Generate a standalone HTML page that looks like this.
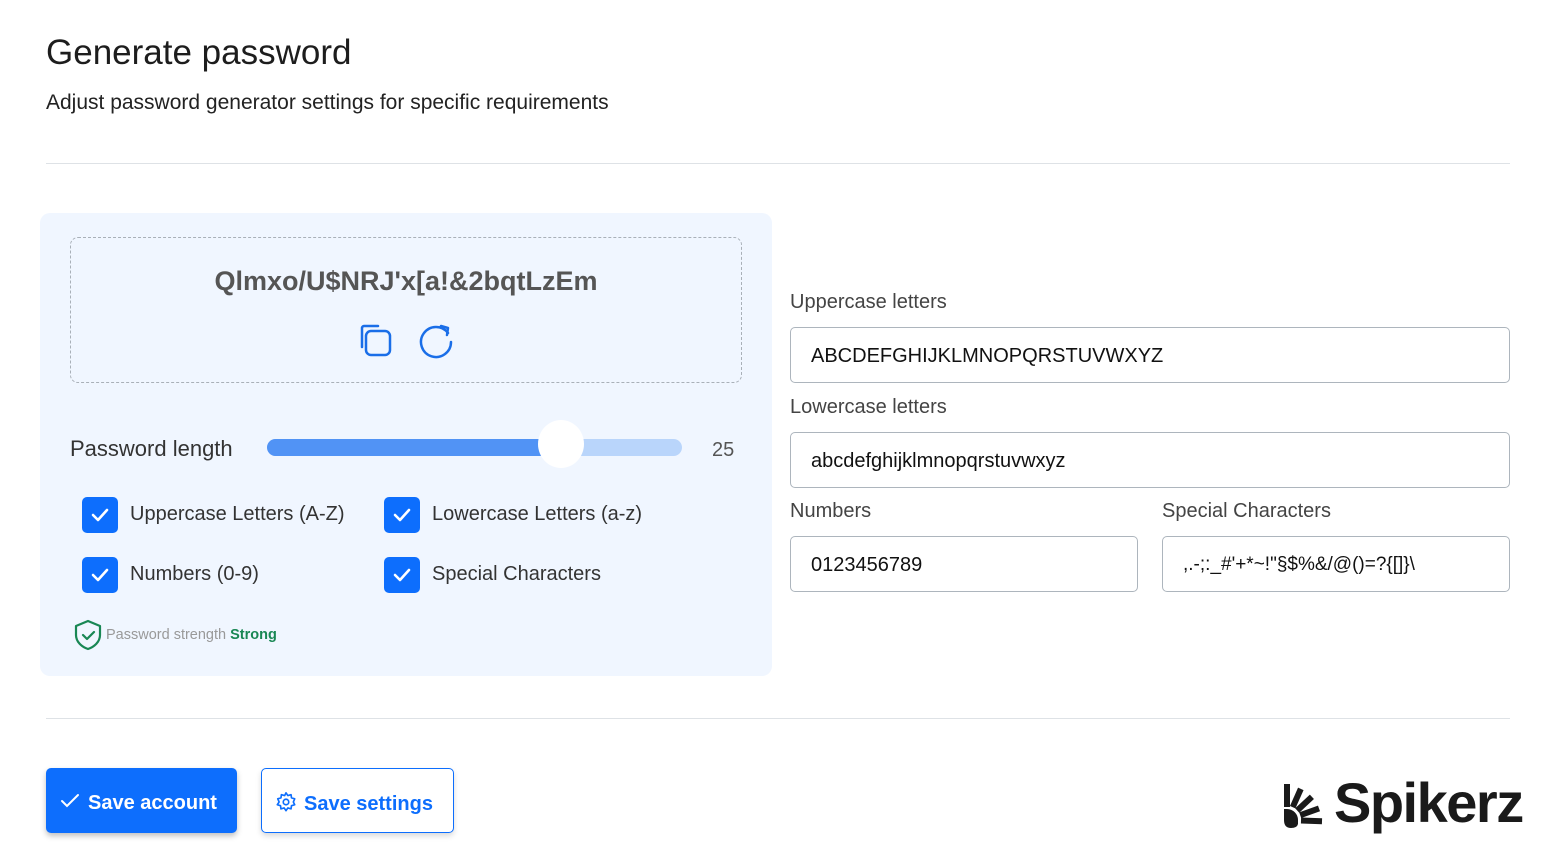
<!DOCTYPE html>
<html><head><meta charset="utf-8"><style>
*{box-sizing:border-box;margin:0;padding:0}
body{width:1556px;height:849px;background:#fff;font-family:"Liberation Sans",sans-serif;color:#212529;position:relative;overflow:hidden}
.abs{position:absolute}
h1{position:absolute;left:46px;top:33px;font-size:35px;font-weight:400;color:#1d1d1d}
.sub{left:46px;top:91px;font-size:21px;color:#222}
.hr{position:absolute;left:46px;width:1464px;height:1px;background:#dee2e6}
.panel{left:40px;top:213px;width:732px;height:463px;background:#f0f6ff;border-radius:10px}
.pw{left:70px;top:237px;width:672px;height:146px;border:1px dashed #a9b0b8;border-radius:8px}
.pwtxt{left:70px;width:672px;top:266px;text-align:center;font-size:27px;font-weight:700;color:#555}
.lbl{font-size:22px;color:#333}
.cb{position:absolute;width:36px;height:36px;background:#0d6efd;border-radius:5px}
.cb svg{position:absolute;left:8px;top:9px}
.cl{font-size:20px;color:#333}
.in{position:absolute;height:56px;border:1px solid #adb5bd;border-radius:5px;background:#fff;font-size:20px;padding:17px 20px 0;color:#111}
.fl{font-size:20px;color:#444}
.btn1{left:46px;top:768px;width:191px;height:65px;background:#0d6efd;border-radius:5px;color:#fff;font-weight:700;font-size:20px;box-shadow:0 3px 6px rgba(0,0,0,.25)}
.btn2{left:261px;top:768px;width:193px;height:65px;border:1px solid #0d6efd;border-radius:5px;color:#0d6efd;font-weight:700;font-size:20px;box-shadow:0 3px 6px rgba(0,0,0,.15)}
</style></head><body>
<h1>Generate password</h1>
<div class="abs sub">Adjust password generator settings for specific requirements</div>
<div class="hr" style="top:163px"></div>
<div class="abs panel"></div>
<div class="abs pw"></div>
<div class="abs pwtxt">Qlmxo/U$NRJ'x[a!&amp;2bqtLzEm</div>
<svg class="abs" style="left:358px;top:322px" width="36" height="36" viewBox="0 0 36 36" fill="none" stroke="#1a6ee8" stroke-width="2.5" stroke-linecap="round"><path d="M4 25V6a2 2 0 0 1 2-2h14"/><rect x="8" y="9" width="24" height="24" rx="5"/></svg>
<svg class="abs" style="left:417px;top:321px" width="38" height="38" viewBox="0 0 38 38" fill="none" stroke="#1a6ee8" stroke-width="2.5" stroke-linecap="round" stroke-linejoin="round"><path d="M31 12A15 15 0 1 0 34 21"/><path d="M24 5l7 2-1 7"/></svg>
<div class="abs lbl" style="left:70px;top:436px">Password length</div>
<div class="abs" style="left:267px;top:439px;width:415px;height:17px;border-radius:9px;background:#b9d5fb"></div>
<div class="abs" style="left:267px;top:439px;width:295px;height:17px;border-radius:9px;background:#5193f5"></div>
<div class="abs" style="left:538px;top:420px;width:46px;height:48px;border-radius:50%;background:#fff"></div>
<div class="abs" style="left:712px;top:439px;font-size:20px;color:#555">25</div>
<div class="cb" style="left:82px;top:497px"><svg width="20" height="18" viewBox="0 0 20 18" fill="none" stroke="#fff" stroke-width="2.6" stroke-linecap="round" stroke-linejoin="round"><path d="M3 9l5 5 9-10"/></svg></div>
<div class="abs cl" style="left:130px;top:503px">Uppercase Letters (A-Z)</div>
<div class="cb" style="left:384px;top:497px"><svg width="20" height="18" viewBox="0 0 20 18" fill="none" stroke="#fff" stroke-width="2.6" stroke-linecap="round" stroke-linejoin="round"><path d="M3 9l5 5 9-10"/></svg></div>
<div class="abs cl" style="left:432px;top:503px">Lowercase Letters (a-z)</div>
<div class="cb" style="left:82px;top:557px"><svg width="20" height="18" viewBox="0 0 20 18" fill="none" stroke="#fff" stroke-width="2.6" stroke-linecap="round" stroke-linejoin="round"><path d="M3 9l5 5 9-10"/></svg></div>
<div class="abs cl" style="left:130px;top:563px">Numbers (0-9)</div>
<div class="cb" style="left:384px;top:557px"><svg width="20" height="18" viewBox="0 0 20 18" fill="none" stroke="#fff" stroke-width="2.6" stroke-linecap="round" stroke-linejoin="round"><path d="M3 9l5 5 9-10"/></svg></div>
<div class="abs cl" style="left:432px;top:563px">Special Characters</div>
<svg class="abs" style="left:74px;top:619px" width="28" height="32" viewBox="0 0 28 32" fill="none" stroke="#198754" stroke-width="2.2" stroke-linejoin="round" stroke-linecap="round"><path d="M14 2L2 7v9c0 7 6 12 12 14 6-2 12-7 12-14V7z"/><path d="M9 16l4 4 7-7"/></svg>
<div class="abs" style="left:106px;top:627px;font-size:14.5px;color:#999">Password strength <b style="color:#198754">Strong</b></div>
<div class="abs fl" style="left:790px;top:291px">Uppercase letters</div>
<div class="in" style="left:790px;top:327px;width:720px">ABCDEFGHIJKLMNOPQRSTUVWXYZ</div>
<div class="abs fl" style="left:790px;top:396px">Lowercase letters</div>
<div class="in" style="left:790px;top:432px;width:720px">abcdefghijklmnopqrstuvwxyz</div>
<div class="abs fl" style="left:790px;top:500px">Numbers</div>
<div class="in" style="left:790px;top:536px;width:348px">0123456789</div>
<div class="abs fl" style="left:1162px;top:500px">Special Characters</div>
<div class="in" style="left:1162px;top:536px;width:348px;font-size:19px">,.-;:_#'+*~!"§$%&amp;/@()=?{[]}\</div>
<div class="hr" style="top:718px"></div>
<div class="abs btn1"><svg class="abs" style="left:14px;top:25px" width="20" height="16" viewBox="0 0 20 16" fill="none" stroke="#fff" stroke-width="2" stroke-linecap="round"><path d="M2 8l5 5 11-11"/></svg><span class="abs" style="left:42px;top:24px">Save account</span></div>
<div class="abs btn2"><svg class="abs" style="left:13px;top:22px" width="22" height="22" viewBox="0 0 24 24" fill="none" stroke="#0d6efd" stroke-width="1.8"><circle cx="12" cy="12" r="3"/><path d="M12 2l2 3 3.5-1 .5 3.5 3.5 1-1.5 3.5 1.5 3-3.5 1-.5 3.5-3.5-1-2 3-2-3-3.5 1-.5-3.5-3.5-1L4.5 12 3 8.5l3.5-1L7 4l3.5 1z" stroke-linejoin="round"/></svg><span class="abs" style="left:42px;top:24px">Save settings</span></div>
<svg class="abs" style="left:1283px;top:780px" width="46" height="48" viewBox="0 0 46 48">
<g stroke="#1a1a1a" stroke-width="6">
<line x1="4" y1="27" x2="4" y2="4"/>
<line x1="9.7" y1="27.2" x2="17.8" y2="8.9"/>
<line x1="14.2" y1="30.5" x2="28.9" y2="16.8"/>
<line x1="17.2" y1="35.2" x2="36" y2="28.4"/>
<line x1="18" y1="40.5" x2="39" y2="41.2"/>
</g>
<path fill="#1a1a1a" d="M1 29h3A11 11 0 0 1 15 40v4Q14 48 8 48Q1 48 1 40Z"/>
</svg>
<div class="abs" style="left:1334px;top:770px;font-size:56px;font-weight:700;color:#1a1a1a;letter-spacing:-1.5px">Spikerz</div>
</body></html>
